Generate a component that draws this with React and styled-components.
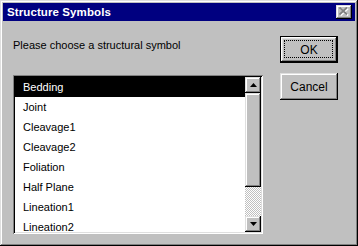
import styled, { createGlobalStyle, css } from "styled-components";

const GlobalStyle = createGlobalStyle`
  html, body {
    margin: 0;
    padding: 0;
    background: #c0c0c0;
  }
  body {
    font-family: "Liberation Sans", Arial, sans-serif;
    font-size: 11px;
  }
`;

const raised = css`
  background: #c0c0c0;
  box-shadow: inset -1px -1px #000, inset 1px 1px #dfdfdf,
    inset -2px -2px #808080, inset 2px 2px #fff;
`;

const Window = styled.div`
  box-sizing: border-box;
  width: 358px;
  height: 246px;
  padding: 3px;
  background: #c0c0c0;
  box-shadow: inset -1px -1px #000, inset 1px 1px #dfdfdf,
    inset -2px -2px #808080, inset 2px 2px #fff;
  display: flex;
  flex-direction: column;
`;

const TitleBar = styled.div`
  height: 18px;
  background: #000080;
  display: flex;
  align-items: center;
  justify-content: space-between;
  padding: 0 3px 0 4px;
  flex-shrink: 0;
`;

const Title = styled.span`
  color: #fff;
  font-weight: bold;
  font-size: 11.5px;
  letter-spacing: 0.1px;
`;

const CloseButton = styled.div`
  ${raised};
  width: 16px;
  height: 14px;
  display: flex;
  align-items: center;
  justify-content: center;
  padding-bottom: 1px;
  box-sizing: border-box;
`;

const Body = styled.div`
  flex: 1;
  display: flex;
  padding: 15px 0 0 10px;
`;

const LeftColumn = styled.div`
  display: flex;
  flex-direction: column;
  width: 250px;
`;

const Label = styled.div`
  color: #000;
  font-size: 11px;
  line-height: 13px;
  margin-top: 3px;
  margin-bottom: 23px;
`;

const ListBox = styled.div`
  box-sizing: border-box;
  width: 250px;
  height: 159px;
  padding: 2px;
  background: #fff;
  box-shadow: inset 1px 1px #808080, inset -1px -1px #fff,
    inset 2px 2px #000, inset -2px -2px #dfdfdf;
  display: flex;
`;

const Items = styled.div`
  flex: 1;
  overflow: hidden;
`;

const Item = styled.div`
  height: 20px;
  line-height: 20px;
  padding-left: 8px;
  color: ${(p) => (p.$selected ? "#fff" : "#000")};
  background: ${(p) => (p.$selected ? "#000" : "#fff")};
  white-space: nowrap;
`;

const ScrollBar = styled.div`
  width: 16px;
  display: flex;
  flex-direction: column;
`;

const ArrowButton = styled.div`
  ${raised};
  width: 16px;
  height: 16px;
  flex-shrink: 0;
  display: flex;
  align-items: center;
  justify-content: center;
`;

const Thumb = styled.div`
  ${raised};
  height: 94px;
  flex-shrink: 0;
`;

const Track = styled.div`
  flex: 1;
  background-color: #c0c0c0;
  background-image: repeating-conic-gradient(#fff 0 25%, #c0c0c0 0 50%);
  background-size: 2px 2px;
`;

const RightColumn = styled.div`
  display: flex;
  flex-direction: column;
  gap: 10px;
  margin-left: 17px;
`;

const Button = styled.div`
  ${raised};
  box-sizing: border-box;
  width: 58px;
  height: 27px;
  display: flex;
  align-items: center;
  justify-content: center;
  font-size: 12px;
  color: #000;
  position: relative;
  ${(p) =>
    p.$default &&
    css`
      box-shadow: inset 0 0 0 1px #000, inset -2px -2px #000,
        inset 2px 2px #fff, inset -3px -3px #808080, inset 3px 3px #dfdfdf;
      &::after {
        content: "";
        position: absolute;
        inset: 4px 5px 5px 4px;
        border: 1px dotted #000;
      }
    `}
`;

const items = [
  "Bedding",
  "Joint",
  "Cleavage1",
  "Cleavage2",
  "Foliation",
  "Half Plane",
  "Lineation1",
  "Lineation2",
];

const Arrow = ({ up }) => (
  <svg width="7" height="4" viewBox="0 0 7 4">
    <path d={up ? "M3.5 0 L7 4 L0 4 Z" : "M0 0 L7 0 L3.5 4 Z"} fill="#000" />
  </svg>
);

export default function App() {
  return (
    <>
      <GlobalStyle />
      <Window>
        <TitleBar>
          <Title>Structure Symbols</Title>
          <CloseButton>
            <svg width="10" height="9" viewBox="0 0 10 9">
              <path d="M1.5 1.5 L9 8.5 M9 1.5 L1.5 8.5" stroke="#fff" strokeWidth="1.8" />
              <path d="M0.5 0.5 L8 7.5 M8 0.5 L0.5 7.5" stroke="#808080" strokeWidth="1.8" />
            </svg>
          </CloseButton>
        </TitleBar>
        <Body>
          <LeftColumn>
            <Label>Please choose a structural symbol</Label>
            <ListBox>
              <Items>
                {items.map((name, i) => (
                  <Item key={name} $selected={i === 0}>
                    {name}
                  </Item>
                ))}
              </Items>
              <ScrollBar>
                <ArrowButton>
                  <Arrow up />
                </ArrowButton>
                <Thumb />
                <Track />
                <ArrowButton>
                  <Arrow />
                </ArrowButton>
              </ScrollBar>
            </ListBox>
          </LeftColumn>
          <RightColumn>
            <Button $default>OK</Button>
            <Button>Cancel</Button>
          </RightColumn>
        </Body>
      </Window>
    </>
  );
}
